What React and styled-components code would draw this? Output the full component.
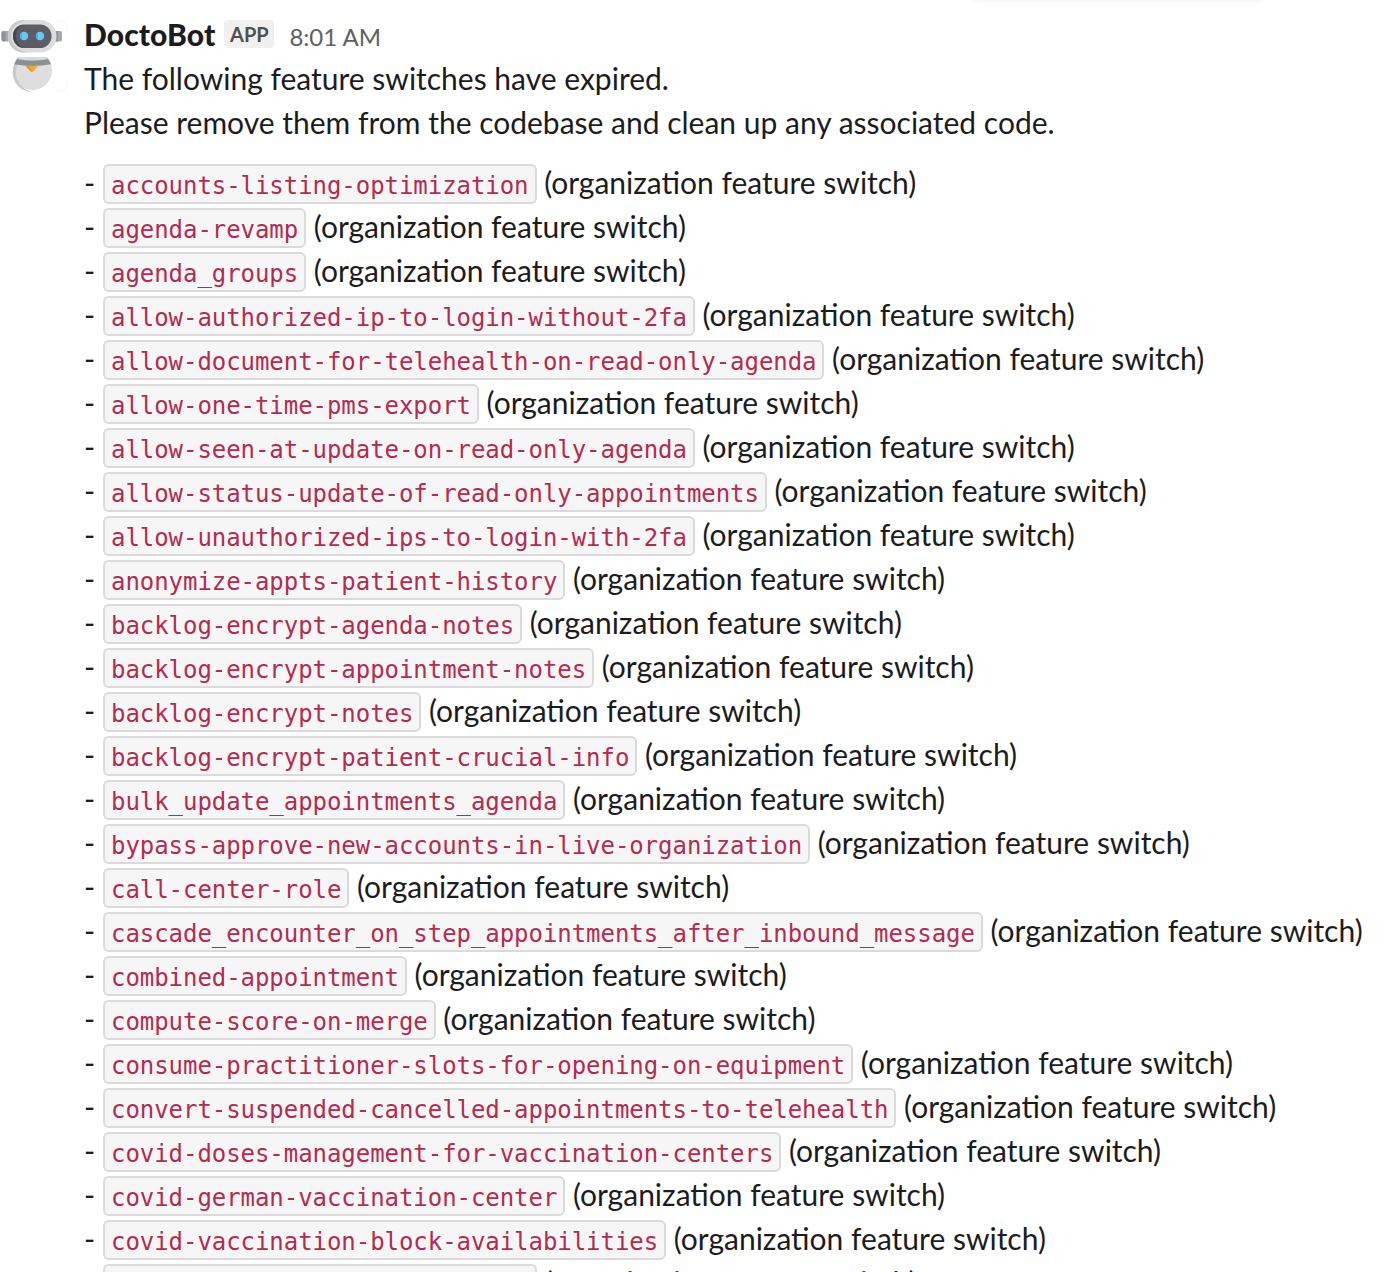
import React from "react";
import styled, { createGlobalStyle } from "styled-components";

const Global = createGlobalStyle`
  html, body { margin: 0; background: #fff; overflow: hidden; }
`;

const Viewport = styled.main`
  position: relative;
  box-sizing: border-box;
  width: 1398px;
  height: 1272px;
  overflow: hidden;
  background: #fff;
  color: #1d1c1d;
  font-family: Lato, "Open Sans", sans-serif;
  font-size: 30px;
  line-height: 44px;
  font-variant-ligatures: common-ligatures;
`;

const FloatingToolbar = styled.div`
  position: absolute;
  top: -62px;
  left: 968px;
  width: 302px;
  height: 60px;
  border-radius: 12px;
  background: #fff;
  box-shadow: 0 1px 6px rgba(0, 0, 0, 0.1);
`;

const Message = styled.article`
  display: flex;
  align-items: flex-start;
  gap: 16px;
`;

const Avatar = styled.svg`
  flex: none;
  width: 68px;
  height: 72px;
  margin-top: 20px;
`;

const Body = styled.div`
  flex: 1;
  min-width: 0;
  white-space: nowrap;
`;

const Header = styled.header`
  display: flex;
  align-items: baseline;
  height: 44px;
  margin-top: 12px;
`;

const Name = styled.span`
  font-weight: 900;
  letter-spacing: 0.1px;
`;

const AppBadge = styled.span`
  align-self: flex-start;
  box-sizing: border-box;
  width: 50px;
  height: 28px;
  margin-top: 8px;
  margin-left: 9px;
  border-radius: 4px;
  background: #f0f0f0;
  color: #505050;
  font-size: 20px;
  font-weight: 700;
  line-height: 29px;
  text-align: center;
`;

const Time = styled.time`
  margin-left: 15px;
  color: #616061;
  font-size: 24px;
`;

const Line = styled.p`
  margin: 0;
  height: 44px;
`;

const List = styled.div`
  margin-top: 16px;
`;

const Item = styled.div`
  display: flex;
  align-items: baseline;
  height: 44px;
`;

const Dash = styled.span`
  flex: none;
  width: 19px;
`;

const Code = styled.code`
  box-sizing: border-box;
  flex: none;
  height: 40px;
  min-width: ${(p) => p.$minWidth || "0"};
  margin-right: 7.6px;
  padding: 0 6px;
  border: 2px solid #dadada;
  border-radius: 6px;
  background: #f6f6f6;
  color: #b42b4f;
  font-family: "DejaVu Sans Mono", monospace;
  font-size: 24px;
  letter-spacing: -0.052px;
  line-height: 40px;
  font-variant-ligatures: none;
`;

const switches = [
  "accounts-listing-optimization",
  "agenda-revamp",
  "agenda_groups",
  "allow-authorized-ip-to-login-without-2fa",
  "allow-document-for-telehealth-on-read-only-agenda",
  "allow-one-time-pms-export",
  "allow-seen-at-update-on-read-only-agenda",
  "allow-status-update-of-read-only-appointments",
  "allow-unauthorized-ips-to-login-with-2fa",
  "anonymize-appts-patient-history",
  "backlog-encrypt-agenda-notes",
  "backlog-encrypt-appointment-notes",
  "backlog-encrypt-notes",
  "backlog-encrypt-patient-crucial-info",
  "bulk_update_appointments_agenda",
  "bypass-approve-new-accounts-in-live-organization",
  "call-center-role",
  "cascade_encounter_on_step_appointments_after_inbound_message",
  "combined-appointment",
  "compute-score-on-merge",
  "consume-practitioner-slots-for-opening-on-equipment",
  "convert-suspended-cancelled-appointments-to-telehealth",
  "covid-doses-management-for-vaccination-centers",
  "covid-german-vaccination-center",
  "covid-vaccination-block-availabilities",
];

function RobotAvatar() {
  return (
    <Avatar viewBox="0 20 68 72" aria-hidden="true">
      <rect x="1.5" y="31" width="9" height="10.5" rx="2" fill="#a5a9ad" />
      <rect x="1.5" y="31" width="4" height="10.5" rx="2" fill="#8d9296" />
      <rect x="53" y="31" width="9" height="10.5" rx="2" fill="#a5a9ad" />
      <rect x="56" y="31" width="2" height="10.5" fill="#8d9296" />
      <rect x="8" y="20" width="48.5" height="32.5" rx="16" fill="#dcdcdc" />
      <path d="M24 20C14 20 8 27 8 36s6 16.500 16 16.500h5C18 51 11 45 11 36S18 21 29 20Z" fill="#c8c9ca" />
      <rect x="13" y="24.500" width="38.500" height="23.500" rx="11.500" fill="#5c5d66" />
      <path d="M24 24.500C17 25 13 30 13 36s4 11.500 11 12c-5-2-8-6-8-12s3-10 8-11.500Z" fill="#464751" />
      <circle cx="24" cy="36" r="4.200" fill="#60cdec" />
      <circle cx="40" cy="36" r="4.200" fill="#60cdec" />
      <path d="M22 32.300a4.200 4.200 0 0 0 0 7.400Z" fill="#45b5df" />
      <path d="M38 32.300a4.200 4.200 0 0 0 0 7.400Z" fill="#45b5df" />
      <path d="M19 57.300H45.500Q48 57.300 49.300 60.500A19.500 19.500 0 1 1 15 62Q16.500 57.300 19 57.300Z" fill="#dedede" />
      <path d="M15.500 62.500A19.500 19.500 0 0 0 32 92C22 89 16 81.500 16 73C16 69 16.500 66 18 63Z" fill="#c8c9ca" />
      <path d="M18.500 57.500Q32 63 46 57.500Q48 58 49.800 61.500L51 64.300Q32 67.500 14.300 64.300L15.500 61.500Q17 58.300 18.500 57.500Z" fill="#8b9095" />
      <path d="M19 57.300H46Q47.500 58.500 47.500 59.300Q32 61.800 18 59.300Q18 58 19 57.300Z" fill="#d8d9da" />
      <path d="M25.500 65.700c4.300.4 8.700.4 13 0L32.800 71.800q-.8.700-1.600 0Z" fill="#f3a832" />
      <path d="M25.500 65.700l3 .2 3.700 6.200q-.5.200-1-.3Z" fill="#df8d31" />
      <path d="M56 20Q68 20 68 32M68 80Q68 92 56 92" fill="none" stroke="#f7f7f7" />
    </Avatar>
  );
}

function SwitchItem({ name }) {
  return (
    <Item>
      <Dash>-</Dash>
      <Code $minWidth={name ? undefined : "434px"}>{name || "\u00a0"}</Code>
      <span>(organization feature switch)</span>
    </Item>
  );
}

export default function App() {
  return (
    <>
      <Global />
      <Viewport>
        <FloatingToolbar />
        <Message>
          <RobotAvatar />
          <Body>
            <Header>
              <Name>DoctoBot</Name>
              <AppBadge>APP</AppBadge>
              <Time>8:01 AM</Time>
            </Header>
            <Line>The following feature switches have expired.</Line>
            <Line>Please remove them from the codebase and clean up any associated code.</Line>
            <List>
              {switches.map((name) => (
                <SwitchItem key={name} name={name} />
              ))}
              <SwitchItem />
            </List>
          </Body>
        </Message>
      </Viewport>
    </>
  );
}
